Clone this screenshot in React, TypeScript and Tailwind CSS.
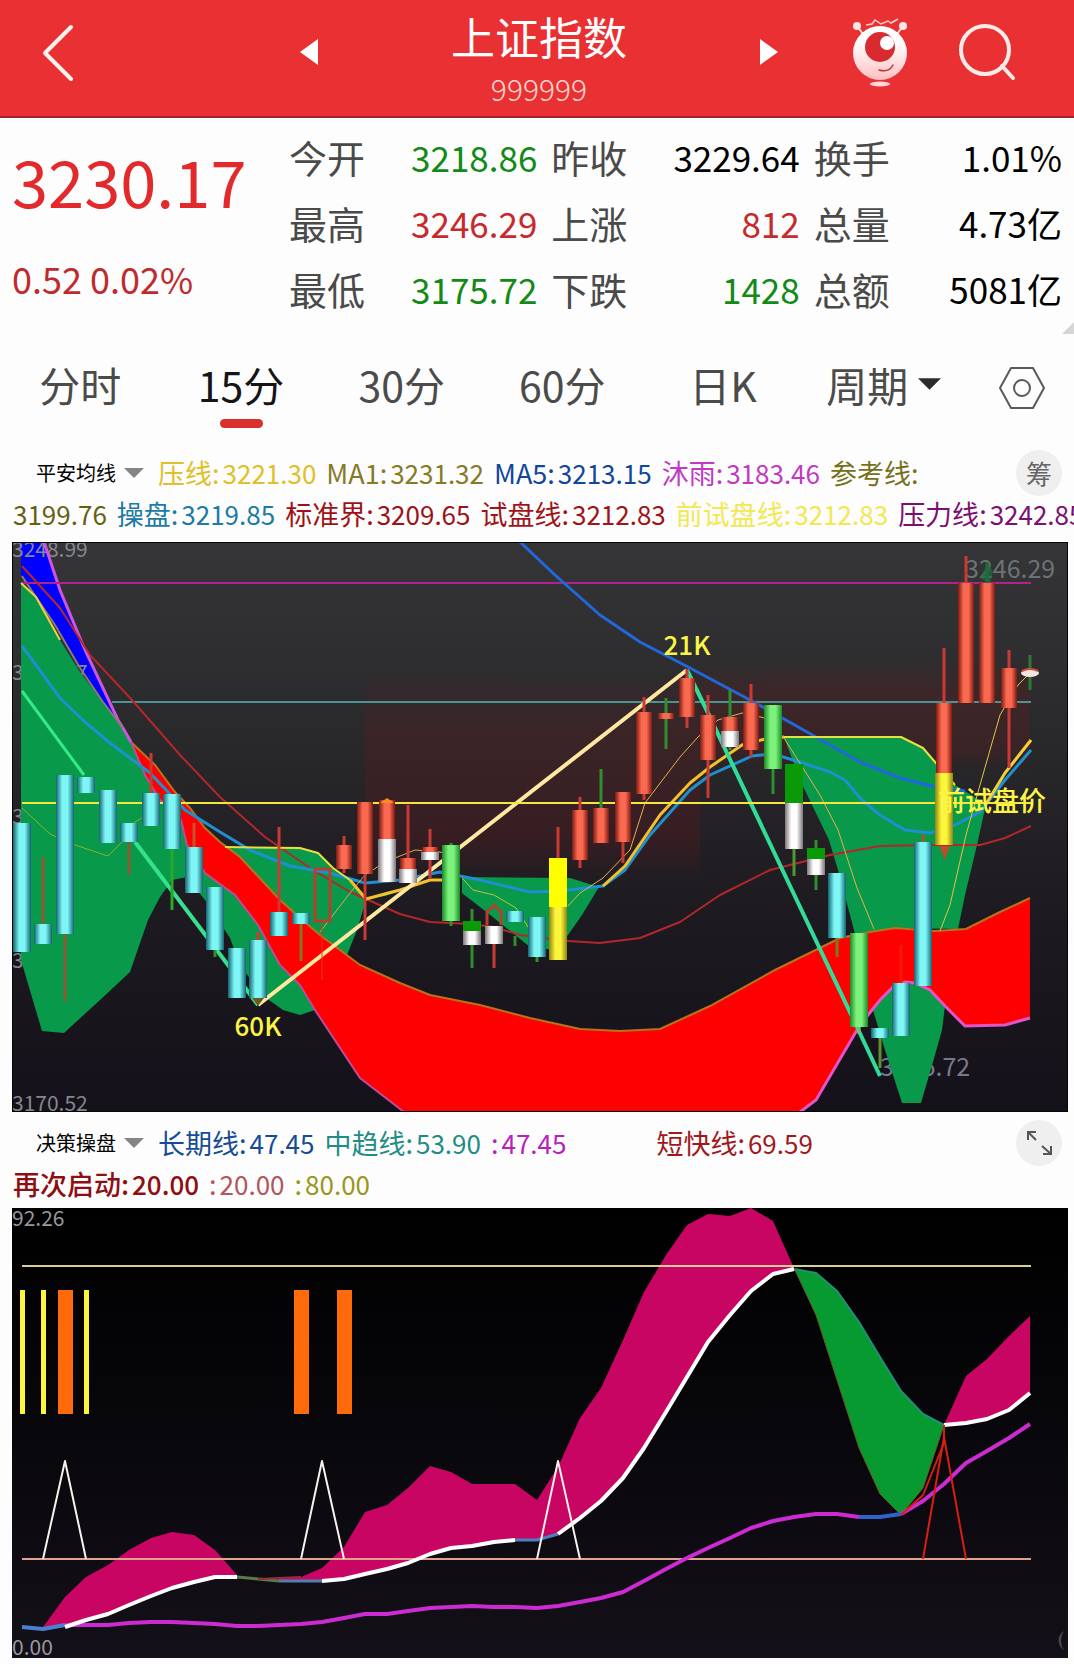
import { useState } from 'react'
import clsx from 'clsx'

type Point = [number, number]

const x1 = (i: number) => Math.round(22 + i * 21.45)
const x2 = (i: number) => Math.round(10 + i * 21.45)
const toPoints = (list: Point[]) => list.map((p) => p.join(',')).join(' ')

const quotes = [
  { label: '今开', value: '3218.86', color: 'text-[#128a16]' },
  { label: '昨收', value: '3229.64', color: 'text-black' },
  { label: '换手', value: '1.01%', color: 'text-black' },
  { label: '最高', value: '3246.29', color: 'text-[#c62a2c]' },
  { label: '上涨', value: '812', color: 'text-[#c62a2c]' },
  { label: '总量', value: '4.73亿', color: 'text-black' },
  { label: '最低', value: '3175.72', color: 'text-[#128a16]' },
  { label: '下跌', value: '1428', color: 'text-[#128a16]' },
  { label: '总额', value: '5081亿', color: 'text-black' },
]

const tabs = ['分时', '15分', '30分', '60分', '日K']

// ---------- main chart data ----------

type Tone = 'cyan' | 'red' | 'white' | 'lime' | 'green' | 'yellow' | 'gold'

const fills: Record<Tone, string> = {
  cyan: 'url(#cyan)',
  red: 'url(#red)',
  white: 'url(#white)',
  lime: 'url(#lime)',
  green: '#0a9a08',
  yellow: '#ffff00',
  gold: 'url(#gold)',
}

interface Candle {
  i: number
  bodies: [Tone, number, number][]
  wick?: [string, number, number]
}

const RED = '#c93a34'
const GREEN = '#2f8f2f'

const candles: Candle[] = [
  { i: 0, bodies: [['cyan', 823, 952]] },
  { i: 1, bodies: [['cyan', 924, 944]], wick: ['#8a5a34', 857, 924] },
  { i: 2, bodies: [['cyan', 775, 934]], wick: ['#8a5a34', 934, 1001] },
  { i: 3, bodies: [['cyan', 777, 793]] },
  { i: 4, bodies: [['cyan', 790, 843]] },
  { i: 5, bodies: [['cyan', 823, 842]], wick: ['#8a5a34', 842, 875] },
  { i: 6, bodies: [['cyan', 793, 826]], wick: [RED, 753, 793] },
  { i: 7, bodies: [['cyan', 794, 849]], wick: ['#2aa82a', 849, 910] },
  { i: 8, bodies: [['cyan', 847, 893]], wick: ['#c8502a', 823, 847] },
  { i: 9, bodies: [['cyan', 887, 950]], wick: [GREEN, 950, 957] },
  { i: 10, bodies: [['cyan', 948, 998]] },
  { i: 11, bodies: [['cyan', 940, 998]], wick: [RED, 932, 940] },
  { i: 12, bodies: [['cyan', 912, 936]], wick: [RED, 827, 912] },
  { i: 13, bodies: [['cyan', 913, 924]], wick: ['#7a7a20', 924, 961] },
  { i: 15, bodies: [['red', 845, 869]], wick: [RED, 836, 873] },
  { i: 16, bodies: [['red', 802, 874]], wick: [RED, 874, 940] },
  { i: 17, bodies: [['red', 800, 839], ['white', 839, 882]] },
  { i: 18, bodies: [['red', 858, 869], ['white', 869, 883]], wick: [RED, 805, 858] },
  { i: 19, bodies: [['red', 847, 852], ['white', 852, 860]], wick: [RED, 829, 879] },
  { i: 20, bodies: [['lime', 845, 921]], wick: [GREEN, 843, 926] },
  { i: 21, bodies: [['green', 921, 931], ['white', 931, 945]], wick: [GREEN, 909, 968] },
  { i: 22, bodies: [['white', 926, 944]], wick: [RED, 944, 968] },
  { i: 23, bodies: [['cyan', 911, 922]], wick: [GREEN, 936, 946] },
  { i: 24, bodies: [['cyan', 917, 957]], wick: [GREEN, 957, 962] },
  { i: 25, bodies: [['yellow', 858, 907], ['gold', 907, 960]], wick: [RED, 827, 858] },
  { i: 26, bodies: [['red', 810, 860]], wick: [RED, 797, 868] },
  { i: 27, bodies: [['red', 808, 843]], wick: [GREEN, 769, 808] },
  { i: 28, bodies: [['red', 792, 842]], wick: [RED, 842, 863] },
  { i: 29, bodies: [['red', 712, 794]], wick: [RED, 697, 800] },
  { i: 30, bodies: [['red', 713, 719]], wick: [GREEN, 698, 749] },
  { i: 31, bodies: [['red', 678, 717]], wick: [RED, 669, 728] },
  { i: 32, bodies: [['red', 715, 760]], wick: [RED, 695, 798] },
  { i: 33, bodies: [['red', 717, 731], ['white', 731, 747]], wick: [GREEN, 690, 750] },
  { i: 34, bodies: [['red', 703, 750]], wick: [RED, 684, 757] },
  { i: 35, bodies: [['lime', 705, 769]], wick: [GREEN, 769, 794] },
  { i: 36, bodies: [['green', 764, 803], ['white', 803, 849]], wick: ['#4f9a2f', 849, 876] },
  { i: 37, bodies: [['green', 848, 859], ['white', 859, 875]], wick: [GREEN, 840, 890] },
  { i: 38, bodies: [['cyan', 873, 938]], wick: ['#7a7a20', 938, 957] },
  { i: 39, bodies: [['lime', 933, 1027]], wick: ['#7ac070', 1027, 1034] },
  { i: 40, bodies: [['cyan', 1028, 1038]], wick: ['#5f8f2f', 1038, 1068] },
  { i: 41, bodies: [['cyan', 983, 1036]], wick: ['#f01808', 945, 983] },
  { i: 42, bodies: [['cyan', 842, 986]], wick: ['#b0502a', 835, 842] },
  { i: 43, bodies: [['red', 703, 773], ['gold', 773, 845]], wick: [RED, 648, 703] },
  { i: 44, bodies: [['red', 583, 703]], wick: [RED, 556, 583] },
  { i: 45, bodies: [['red', 583, 703]], wick: ['#1f6b41', 562, 583] },
  { i: 46, bodies: [['red', 668, 708]], wick: [RED, 650, 768] },
]

const redTop: Point[] = [
  [131, 742], [155, 765], [175, 792], [190, 808], [205, 828], [220, 842], [240, 857], [280, 900],
  [300, 918], [320, 935], [360, 965], [400, 983], [430, 995], [480, 1005], [530, 1018], [580, 1029],
  [620, 1031], [660, 1029], [710, 1006], [775, 970], [840, 938], [870, 932], [895, 928], [935, 931],
  [966, 929], [1000, 912], [1030, 898],
]

const redBottomLeft: Point[] = [
  [131, 742], [145, 775], [160, 800], [181, 820], [187, 845], [205, 873], [235, 895], [258, 925],
  [280, 965], [300, 985], [315, 1010], [360, 1078], [404, 1112],
]

const redBottomRight: Point[] = [
  [800, 1112], [816, 1100], [857, 1030], [868, 1015], [880, 1000], [893, 987], [905, 982],
  [915, 983], [930, 990], [945, 1006], [965, 1026], [1005, 1025], [1030, 1018],
]

const greenAreas: Point[][] = [
  [
    [21, 583], [36, 597], [60, 640], [80, 672], [103, 702], [122, 727], ...redBottomLeft.slice(0, 11),
    [300, 1015], [283, 1010], [262, 995], [240, 965], [230, 938], [205, 900], [187, 877], [172, 880],
    [160, 897], [148, 920], [130, 972], [100, 1000], [64, 1033], [42, 1031], [21, 960],
  ],
  [
    [225, 847], [300, 848], [318, 853], [333, 868], [350, 880], [366, 900], [357, 930], [347, 955],
    [320, 935], [280, 900], [240, 857],
  ],
  [[366, 898], [385, 896], [404, 889], [390, 891]],
  [
    [462, 877], [570, 878], [599, 887], [582, 915], [568, 935], [555, 950], [530, 947], [494, 918],
    [462, 893],
  ],
  [
    [784, 737], [901, 737], [923, 748], [935, 762], [955, 785], [986, 804], [977, 845], [965, 895],
    [958, 929], [895, 928], [855, 934], [850, 915], [838, 870], [829, 840], [800, 780],
  ],
  [
    [873, 1010], [880, 1000], [893, 987], [905, 982], [915, 983], [930, 990], [945, 1006],
    [942, 1030], [935, 1055], [921, 1103], [902, 1103], [885, 1050],
  ],
]

const blueArea: Point[] = [
  [21, 542], [44, 542], [60, 590], [85, 650], [118, 720], [123, 728], [103, 702], [80, 668],
  [55, 625], [36, 597], [21, 575],
]

const mainLines: { color: string; width: number; points: Point[] }[] = [
  {
    color: '#b3272b',
    width: 2,
    points: [
      [22, 566], [60, 608], [90, 655], [132, 700], [180, 755], [220, 797], [265, 837], [310, 868],
      [350, 892], [375, 903], [400, 914], [430, 922], [470, 924], [494, 927], [520, 935], [568, 941],
      [600, 943], [640, 938], [680, 922], [720, 895], [770, 870], [830, 855], [880, 846], [930, 845],
      [980, 845], [1005, 838], [1031, 826],
    ],
  },
  {
    color: '#1f8fd0',
    width: 3,
    points: [
      [22, 646], [60, 698], [85, 722], [110, 743], [150, 773], [185, 810], [220, 832], [250, 850],
      [290, 866], [330, 873], [365, 883], [400, 880], [440, 872], [480, 880], [530, 892], [560, 891],
      [603, 886], [625, 870], [650, 835], [690, 790], [710, 775], [752, 756], [773, 754], [800, 762],
      [830, 772], [845, 780], [862, 800], [880, 815], [905, 830], [930, 833], [955, 825], [980, 812],
      [1005, 780], [1031, 750],
    ],
  },
  {
    color: '#2068dc',
    width: 3,
    points: [
      [520, 542], [555, 575], [600, 615], [640, 642], [690, 668], [750, 700], [800, 728], [860, 762],
      [900, 778], [935, 787], [965, 791],
    ],
  },
  {
    color: '#f2c22e',
    width: 3,
    points: [[350, 880], [366, 899], [400, 890], [430, 880], [455, 880]],
  },
  {
    color: '#f2c22e',
    width: 3,
    points: [
      [603, 886], [625, 866], [660, 815], [690, 783], [710, 767], [742, 745], [765, 739], [784, 737],
    ],
  },
  { color: '#f5cf3a', width: 3, points: [[986, 804], [1005, 773], [1031, 740]] },
  {
    color: '#e8e040',
    width: 2,
    points: [[225, 847], [300, 848], [318, 853], [333, 868], [350, 880]],
  },
  {
    color: '#e8e040',
    width: 2,
    points: [[784, 737], [901, 737], [923, 748], [935, 762], [955, 785]],
  },
  { color: '#f0d040', width: 2, points: [[21, 583], [36, 597], [60, 640]] },
  {
    color: '#8fb02a',
    width: 1,
    points: [[22, 808], [50, 834], [75, 845], [108, 856], [122, 842], [135, 822], [152, 812]],
  },
  {
    color: '#d7aa5a',
    width: 1,
    points: [[320, 932], [350, 893], [365, 875], [385, 862], [415, 850], [440, 852], [455, 857]],
  },
  {
    color: '#c8c03a',
    width: 1,
    points: [[462, 878], [473, 890], [494, 895], [516, 908], [530, 930]],
  },
  {
    color: '#e8b04a',
    width: 1,
    points: [
      [568, 906], [580, 893], [603, 878], [630, 850], [645, 803], [680, 757], [698, 737], [718, 720],
      [742, 713], [765, 718], [784, 738], [820, 795], [838, 830], [857, 888], [874, 929],
    ],
  },
  {
    color: '#e8c04a',
    width: 1,
    points: [[940, 931], [950, 905], [966, 835], [980, 785], [1000, 715], [1018, 685], [1031, 672]],
  },
]

// ---------- oscillator data ----------

const slow = [
  419, 421, 419, 412, 406, 397, 388, 380, 374, 369, 369, 371, 373, 373, 373, 371, 366, 361, 355, 346,
  340, 338, 334, 332, 332, 326, 310, 293, 270, 240, 204, 169, 134, 107, 83, 66, 61, 65, 83, 114, 149,
  183, 206, 217, 215, 211, 202, 185,
]

const fast = [
  419, 419, 389, 369, 357, 342, 330, 324, 327, 342, 367, 371, 370, 369, 360, 339, 304, 297, 280, 258,
  264, 276, 276, 276, 292, 259, 210, 180, 132, 84, 47, 17, 6, 8, 0, 13, 60, 107, 172, 240, 286, 307,
  280, 217, 168, 151, 128, 108,
]

const longTerm = [
  419, 421, 417, 417, 417, 415, 414, 414, 415, 416, 418, 418, 417, 416, 414, 410, 406, 406, 403, 400,
  399, 398, 399, 399, 400, 398, 394, 390, 384, 373, 361, 350, 340, 330, 320, 313, 309, 306, 306, 309,
  309, 306, 293, 276, 255, 243, 230, 216,
]

const slice = (data: number[], from: number, to: number): Point[] =>
  data.slice(from, to + 1).map((y, k) => [x2(from + k), y])

const band = (from: number, to: number) =>
  toPoints([...slice(fast, from, to), ...slice(slow, from, to).reverse()])

function CylinderGradient({ id, edge, mid }: { id: string; edge: string; mid: string }) {
  return (
    <linearGradient id={id} x1="0" x2="1" y1="0" y2="0">
      <stop offset="0" stopColor={edge} />
      <stop offset="0.35" stopColor={mid} />
      <stop offset="0.65" stopColor={mid} />
      <stop offset="1" stopColor={edge} />
    </linearGradient>
  )
}

function MainChart() {
  return (
    <svg
      viewBox="12 542 1056 570"
      className="block h-auto w-full"
      role="img"
      aria-label="15分 K线图"
      fontFamily="'Noto Sans CJK SC', sans-serif"
    >
      <defs>
        <linearGradient id="panel" x1="0" x2="0" y1="0" y2="1">
          <stop offset="0" stopColor="#353537" />
          <stop offset="0.35" stopColor="#29282a" />
          <stop offset="0.7" stopColor="#1b181f" />
          <stop offset="1" stopColor="#15111a" />
        </linearGradient>
        <linearGradient id="glow" x1="0" x2="0" y1="0" y2="1">
          <stop offset="0" stopColor="#7a1418" stopOpacity="0" />
          <stop offset="0.3" stopColor="#7a1418" stopOpacity="0.22" />
          <stop offset="0.8" stopColor="#7a1418" stopOpacity="0.22" />
          <stop offset="1" stopColor="#7a1418" stopOpacity="0" />
        </linearGradient>
        <CylinderGradient id="cyan" edge="#126570" mid="#7ef6f6" />
        <CylinderGradient id="red" edge="#7c1a12" mid="#fb6a50" />
        <CylinderGradient id="white" edge="#7c7479" mid="#ffffff" />
        <CylinderGradient id="lime" edge="#1a8a25" mid="#7cf27c" />
        <CylinderGradient id="gold" edge="#8f8410" mid="#fdf53a" />
      </defs>
      <rect x="12" y="542" width="1056" height="570" fill="url(#panel)" />
      <rect x="365" y="670" width="335" height="210" fill="url(#glow)" />
      <rect x="700" y="660" width="330" height="110" fill="url(#glow)" />

      <polygon points={toPoints(blueArea)} fill="#0000ff" />

      <g fill="#85878e" fontSize="21">
        <text x="12" y="557">3248.99</text>
        <text x="12" y="680">3229.37</text>
        <text x="12" y="824">3209.76</text>
        <text x="12" y="968">3190.14</text>
        <text x="12" y="1111">3170.52</text>
      </g>
      <text x="880" y="1076" fill="#77788a" fontSize="25">3175.72</text>
      <text x="965" y="578" fill="#6c7376" fontSize="25">3246.29</text>

      <polygon
        points={toPoints([...redTop, ...[...redBottomRight].reverse(), ...[...redBottomLeft].reverse()])}
        fill="#ff0000"
      />
      {greenAreas.map((area, i) => (
        <polygon key={i} points={toPoints(area)} fill="#08994b" />
      ))}
      <polyline points={toPoints(redTop)} fill="none" stroke="#b8741c" strokeWidth="2" />
      <polyline points={toPoints(redBottomLeft)} fill="none" stroke="#c04a9a" strokeWidth="2" />
      <polyline points={toPoints(redBottomRight)} fill="none" stroke="#e055c8" strokeWidth="3" />
      <polyline points="44,542 60,590 85,650 118,720 123,728 131,742" fill="none" stroke="#cf55dc" strokeWidth="3" />
      <polyline points="22,576 36,597 55,625 80,668 103,702 123,728" fill="none" stroke="#8a7a78" strokeWidth="2" />

      <line x1="22" x2="1031" y1="583" y2="583" stroke="#b3228c" strokeWidth="2" />
      <line x1="112" x2="1031" y1="702" y2="702" stroke="#4d9391" strokeWidth="2" />

      {mainLines.map((line, i) => (
        <polyline
          key={i}
          points={toPoints(line.points)}
          fill="none"
          stroke={line.color}
          strokeWidth={line.width}
          strokeLinejoin="round"
        />
      ))}

      <polyline points="22,691 84,775" fill="none" stroke="#35ea86" strokeWidth="3" />
      <polyline points="135,842 222,957 258,1005" fill="none" stroke="#35e08e" strokeWidth="4" />
      <line x1="258" y1="1005" x2="687" y2="670" stroke="#ffe9a2" strokeWidth="4" />
      <polyline points="687,670 708,713 857,1027 880,1076" fill="none" stroke="#31dc98" strokeWidth="4" />

      <line x1="22" x2="1031" y1="803" y2="803" stroke="#f4e63c" strokeWidth="2" />

      {candles.map((c) => (
        <g key={c.i}>
          {c.wick && (
            <line x1={x1(c.i)} x2={x1(c.i)} y1={c.wick[1]} y2={c.wick[2]} stroke={c.wick[0]} strokeWidth="3" />
          )}
          {c.bodies.map(([tone, top, bottom]) => (
            <rect
              key={top}
              x={x1(c.i) - (tone === 'red' ? 8 : 9)}
              y={top}
              width={tone === 'red' ? 16 : 18}
              height={bottom - top}
              fill={fills[tone]}
            />
          ))}
        </g>
      ))}

      <rect x="315" y="869" width="15" height="52" fill="none" stroke="#b5412c" strokeWidth="3" />
      <line x1="322" x2="322" y1="922" y2="980" stroke="#d83a18" strokeWidth="1" />
      <path d="M487 925V912L494 905L501 912V925" fill="none" stroke="#b5412c" strokeWidth="3" />
      <path d="M380 803L387 798L394 803Z" fill="#ff8a20" />
      <path d="M939 846H950L945 860Z" fill="#b5502a" />
      <path d="M980 578L988 562L993 572L990 583Z" fill="#1f6b41" opacity="0.7" />
      <line x1="1030" x2="1030" y1="655" y2="690" stroke="#2a7a35" strokeWidth="3" />
      <ellipse cx="1030" cy="673" rx="9" ry="4" fill="#f3e4e0" />
      <path d="M1022 671Q1030 667 1038 671" fill="none" stroke="#c8503c" strokeWidth="2" />
      <path d="M252 998H264L258 1006Z" fill="#6b5a20" />

      <g fill="#fbf545">
        <text x="687" y="655" fontSize="26" fontWeight="500" textAnchor="middle">21K</text>
        <text x="258" y="1036" fontSize="26" fontWeight="500" textAnchor="middle">60K</text>
        <text x="938" y="811" fontSize="27" fontWeight="500">前试盘价</text>
      </g>
      <path d="M12 542H1068V1112H12Z" fill="none" stroke="#050505" strokeWidth="2" />
    </svg>
  )
}

function Oscillator() {
  return (
    <svg
      viewBox="0 0 1056 450"
      className="block h-auto w-full"
      role="img"
      aria-label="决策操盘"
      fontFamily="'Noto Sans CJK SC', sans-serif"
    >
      <defs>
        <linearGradient id="night" x1="0" x2="0" y1="0" y2="1">
          <stop offset="0" stopColor="#000000" />
          <stop offset="0.5" stopColor="#08070b" />
          <stop offset="1" stopColor="#141019" />
        </linearGradient>
      </defs>
      <rect width="1056" height="450" fill="url(#night)" />

      {[0, 1, 3].map((i) => (
        <rect key={i} x={x2(i) - 2} y="82" width="5" height="124" fill="#fbf53c" />
      ))}
      {[2, 13, 15].map((i) => (
        <rect key={i} x={x2(i) - 7} y="82" width="15" height="124" fill="#ff6a0a" />
      ))}

      <polygon points={band(1, 10)} fill="#c90563" />
      <polygon points={band(12, 36)} fill="#c90563" />
      <polygon points={band(36, 43)} fill="#079a31" />
      <polygon points={band(43, 47)} fill="#c90563" />

      <line x1="10" x2="1019" y1="58" y2="58" stroke="#d8cf96" strokeWidth="2" />
      <line x1="10" x2="1019" y1="351" y2="351" stroke="#dda48f" strokeWidth="2" />

      <polyline points={toPoints(slice(slow, 36, 43))} fill="none" stroke="#1f8f7a" strokeWidth="2" />
      <polyline points={toPoints(slice(fast, 36, 43))} fill="none" stroke="#6b5a20" strokeWidth="1" />

      <g fill="none" strokeLinejoin="round">
        <polyline points={toPoints(slice(longTerm, 2, 39))} stroke="#cb2bd0" strokeWidth="4" />
        <polyline points={toPoints(slice(longTerm, 41, 47))} stroke="#cb2bd0" strokeWidth="4" />
        <polyline points={toPoints(slice(longTerm, 39, 41))} stroke="#2f62cc" strokeWidth="4" />
        <polyline points={toPoints(slice(longTerm, 0, 2))} stroke="#4a80d0" strokeWidth="4" />
        <polyline points={toPoints(slice(slow, 10, 12))} stroke="#5a7a4a" strokeWidth="3" />
        <polyline points={toPoints(slice(fast, 11, 13))} stroke="#9a2a3a" strokeWidth="2" />
        <polyline points={toPoints(slice(slow, 12, 14))} stroke="#4f7fae" strokeWidth="3" />
        <polyline points={toPoints(slice(slow, 23, 25))} stroke="#4f7fbe" strokeWidth="3" />
        <polyline points={toPoints(slice(slow, 2, 10))} stroke="#ffffff" strokeWidth="4" />
        <polyline points={toPoints(slice(slow, 14, 23))} stroke="#ffffff" strokeWidth="4" />
        <polyline points={toPoints(slice(slow, 25, 36))} stroke="#ffffff" strokeWidth="4" />
        <polyline points={toPoints(slice(slow, 43, 47))} stroke="#ffffff" strokeWidth="4" />
        {[2, 14, 25].map((i) => (
          <polyline
            key={i}
            points={toPoints([[x2(i - 1), 351], [x2(i), 253], [x2(i + 1), 351]])}
            stroke="#f8f2ea"
            strokeWidth="2"
          />
        ))}
        <polyline
          points={toPoints([[x2(42), 351], [x2(43), 229], [x2(44), 351]])}
          stroke="#d81e14"
          strokeWidth="2"
        />
        <polyline
          points={toPoints([[x2(43), 217], [x2(43), 235], [x2(42), 287], [x2(41), 307]])}
          stroke="#d81e14"
          strokeWidth="2"
        />
      </g>

      <g fill="#98989e" fontSize="21">
        <text x="0" y="18">92.26</text>
        <text x="0" y="447">0.00</text>
      </g>
      <path d="M1052 423A11 11 0 0 0 1052 442A16 16 0 0 1 1052 423Z" fill="#4a4850" />
    </svg>
  )
}

function Item({ name, value, color }: { name: string; value?: string; color: string }) {
  return (
    <span className={clsx('flex items-baseline gap-[3px]', color)}>
      <span>{name}:</span>
      {value && <span className="text-[26px]">{value}</span>}
    </span>
  )
}

function Caret({ className }: { className: string }) {
  return (
    <svg viewBox="0 0 20 10" className={className} fill="currentColor" aria-hidden="true">
      <path d="M0 0H20L10 10Z" />
    </svg>
  )
}

function IndicatorSelect({ id, name }: { id: string; name: string }) {
  return (
    <label htmlFor={id} className="mr-1 ml-6 flex items-center gap-2">
      <select id={id} aria-label="指标" className="appearance-none bg-transparent text-xl text-black outline-none">
        <option>{name}</option>
      </select>
      <Caret className="h-[10px] w-5 text-[#858585]" />
    </label>
  )
}

export default function App() {
  const [active, setActive] = useState('15分')

  return (
    <main className="min-h-screen overflow-hidden bg-[#fdfdfd] font-['Noto_Sans_CJK_SC',sans-serif]">
      <header className="grid grid-cols-[1fr_auto_1fr] items-center border-b-2 border-[#a82024] bg-[#e93133] pl-1 text-white">
        <div className="pb-3 pl-9">
          <button aria-label="返回" className="block">
            <svg viewBox="0 0 36 60" className="h-[60px] w-9" fill="none" stroke="#fff3ee" strokeWidth="4" strokeLinecap="round" strokeLinejoin="round">
              <path d="M31 5L5 31L31 57" />
            </svg>
          </button>
        </div>
        <div className="flex items-center gap-[133px]">
          <button aria-label="上一个" className="pb-3">
            <svg viewBox="0 0 18 26" className="block h-[26px] w-[18px]" fill="#fff">
              <path d="M18 0V26L0 13Z" />
            </svg>
          </button>
          <div className="pt-[10px] pb-[2px] text-center">
            <h1 className="text-[44px] leading-[52px]">上证指数</h1>
            <p className="text-3xl leading-[52px] font-light text-[#ffd6cf]">999999</p>
          </div>
          <button aria-label="下一个" className="pb-3">
            <svg viewBox="0 0 18 26" className="block h-[26px] w-[18px]" fill="#fff">
              <path d="M0 0V26L18 13Z" />
            </svg>
          </button>
        </div>
        <div className="flex items-center justify-end gap-[50px] pr-[58px] pb-3">
          <button aria-label="智能助手">
            <svg viewBox="0 0 56 70" className="block h-[70px] w-14">
              <defs>
                <linearGradient id="bot" x1="0" x2="0" y1="0" y2="1">
                  <stop offset="0.3" stopColor="#ffffff" />
                  <stop offset="1" stopColor="#ffbfc0" />
                </linearGradient>
              </defs>
              <path d="M5 9L11 17M51 9L45 17" stroke="#ffe2de" strokeWidth="2" />
              <circle cx="5" cy="9" r="4" fill="#ffe8e4" />
              <circle cx="51" cy="9" r="4" fill="#ffe8e4" />
              <path d="M14 8L20 7L23 3L29 7L36 4L39 6L46 2" fill="none" stroke="#ffcfc9" strokeWidth="1.5" />
              <circle cx="28" cy="36" r="27" fill="url(#bot)" />
              <circle cx="28" cy="30" r="15" fill="#d92a30" />
              <circle cx="35" cy="26" r="7" fill="#ffffff" />
              <path d="M27 53Q37 56 41 48" fill="none" stroke="#b8383c" strokeWidth="1.5" strokeLinecap="round" />
              <ellipse cx="28" cy="67" rx="10" ry="2.5" fill="#ffd9d5" />
            </svg>
          </button>
          <button aria-label="搜索">
            <svg viewBox="0 0 58 58" className="block h-[58px] w-[58px]" fill="none" stroke="#ffece8" strokeWidth="4" strokeLinecap="round">
              <circle cx="27" cy="27" r="24" />
              <path d="M44 43L55 55" />
            </svg>
          </button>
        </div>
      </header>

      <section className="relative flex px-3 pt-[6px]">
        <div className="w-[277px] shrink-0">
          <p className="text-[65px] leading-[112px] text-[#e22a2c]">3230.17</p>
          <p className="text-4xl leading-[84px] text-[#c02a2c]">0.52 0.02%</p>
        </div>
        <dl className="grid flex-1 grid-cols-3 gap-x-[14px]">
          {quotes.map((q) => (
            <div key={q.label} className="flex items-center justify-between leading-[66px]">
              <dt className="text-[38px] text-[#4a4a4a]">{q.label}</dt>
              <dd className={clsx('text-[35px]', q.color)}>{q.value}</dd>
            </div>
          ))}
        </dl>
        <svg viewBox="0 0 12 12" className="absolute right-0 -bottom-3 h-3 w-3" fill="#d6d6d6" aria-hidden="true">
          <path d="M12 0V12H0Z" />
        </svg>
      </section>

      <nav className="flex items-start pt-[27px] pb-[22px] text-[41px] leading-[70px] text-[#4b4b4b]">
        {tabs.map((tab) => (
          <button
            key={tab}
            onClick={() => setActive(tab)}
            className={clsx('flex flex-1 flex-col items-center', tab === active && 'text-[#151515]')}
          >
            {tab}
            <span className={clsx('h-[9px] w-[43px] rounded-full', tab === active && 'bg-[#d8302c]')} />
          </button>
        ))}
        <label htmlFor="period" className="flex flex-1 items-center justify-center gap-[10px]">
          <select id="period" aria-label="周期" className="appearance-none bg-transparent outline-none">
            <option>周期</option>
          </select>
          <Caret className="h-3 w-[23px] text-[#2b2b2b]" />
        </label>
        <button aria-label="设置" className="flex h-[78px] w-[110px] items-center pl-[35px]">
          <svg viewBox="0 0 46 42" className="h-[42px] w-[46px]" fill="none" stroke="#5a5a5a" strokeWidth="2">
            <path d="M12 1H34L45 21L34 41H12L1 21Z" strokeLinejoin="round" />
            <circle cx="23" cy="21" r="8" />
          </svg>
        </button>
      </nav>

      <section className="text-[27px] whitespace-nowrap">
        <div className="flex h-[46px] items-center gap-[10px] px-3">
          <IndicatorSelect id="main-indicator" name="平安均线" />
          <Item name="压线" value="3221.30" color="text-[#e0c02a]" />
          <Item name="MA1" value="3231.32" color="text-[#857a26]" />
          <Item name="MA5" value="3213.15" color="text-[#10479a]" />
          <Item name="沐雨" value="3183.46" color="text-[#c23ac4]" />
          <Item name="参考线" color="text-[#77701a]" />
          <button className="ml-auto h-[46px] w-[46px] shrink-0 rounded-full bg-[#efefef] text-[26px] leading-[46px] text-[#666]">
            筹
          </button>
        </div>
        <div className="flex items-baseline gap-[10px] pb-[10px] pl-[13px] leading-[36px]">
          <span className="text-[26px] text-[#665f12]">3199.76</span>
          <Item name="操盘" value="3219.85" color="text-[#1c7aa4]" />
          <Item name="标准界" value="3209.65" color="text-[#9c1216]" />
          <Item name="试盘线" value="3212.83" color="text-[#a01418]" />
          <Item name="前试盘线" value="3212.83" color="text-[#f3e752]" />
          <Item name="压力线" value="3242.85" color="text-[#7c1070]" />
        </div>
      </section>

      <div className="pr-[6px] pl-3">
        <MainChart />
      </div>

      <section className="pt-2 text-[27px] whitespace-nowrap">
        <div className="flex h-[46px] items-center gap-[10px] px-3">
          <IndicatorSelect id="sub-indicator" name="决策操盘" />
          <Item name="长期线" value="47.45" color="text-[#164c94]" />
          <Item name="中趋线" value="53.90" color="text-[#1f8c86]" />
          <Item name="" value="47.45" color="text-[#b820c0]" />
          <Item name="短快线" value="69.59" color="ml-20 text-[#a01a1c]" />
          <button aria-label="全屏" className="ml-auto flex h-[46px] w-[46px] shrink-0 items-center justify-center rounded-full bg-[#efefef]">
            <svg viewBox="0 0 26 26" className="h-[26px] w-[26px]" fill="none" stroke="#555" strokeWidth="2">
              <path d="M2 10V2H10M2 2L10 10M25 16V24H17M25 24L16 16" />
            </svg>
          </button>
        </div>
        <div className="flex items-baseline gap-[10px] pb-[6px] pl-[13px] leading-[36px]">
          <Item name="再次启动" value="20.00" color="text-[#8f0e12] font-medium" />
          <Item name="" value="20.00" color="text-[#b0565c]" />
          <Item name="" value="80.00" color="text-[#9a961c]" />
        </div>
      </section>

      <div className="pr-[6px] pb-[6px] pl-3">
        <Oscillator />
      </div>
    </main>
  )
}
